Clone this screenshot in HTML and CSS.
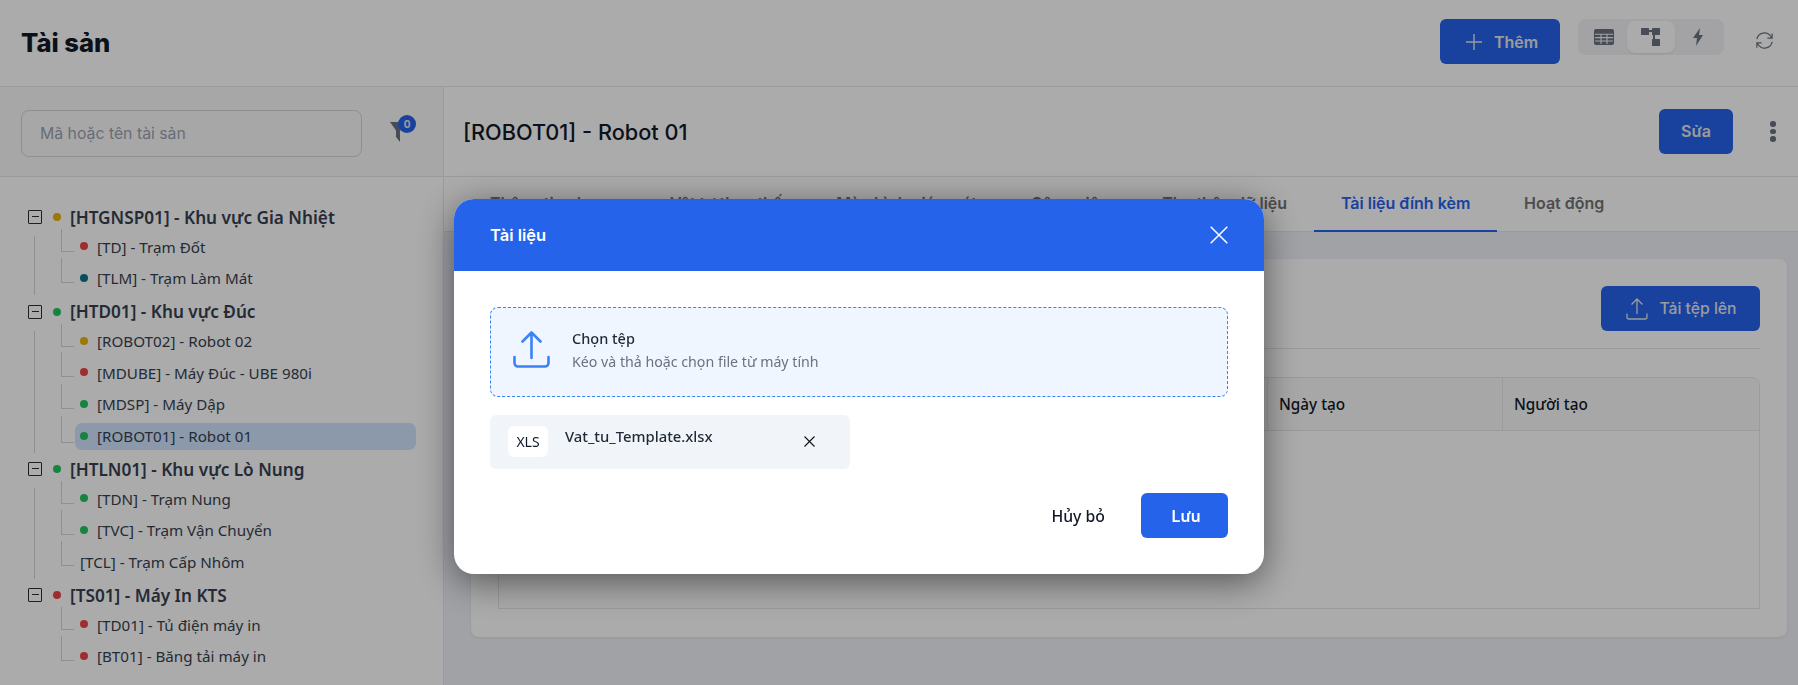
FILE: index.html
```html
<!DOCTYPE html>
<html lang="vi">
<head>
<meta charset="utf-8">
<title>Tài sản</title>
<link rel="stylesheet" href="styles.css">
</head>
<body>
<div class="app">
  <header class="topbar">
    <h1 class="page-title">Tài sản</h1>
    <div class="top-actions">
      <button class="btn btn-add">
        <svg class="ico-plus" viewBox="0 0 16 16"><path d="M8 0v16M0 8h16"/></svg>
        <span>Thêm</span>
      </button>
      <div class="segment">
        <span class="seg-item">
          <svg width="20" height="16" viewBox="0 0 20 16"><rect width="20" height="16" rx="2" fill="#6b7280"/><path d="M1 5.2h18M1 8.6h18M1 12h18M7 5v10M13 5v10" stroke="#f3f4f6" stroke-width="1.1"/></svg>
        </span>
        <span class="seg-item seg-active">
          <svg width="19" height="18" viewBox="0 0 19 18"><g fill="#6b7280"><rect width="8" height="7" y="0" rx=".6"/><rect x="11" width="8" height="7" rx=".6"/><rect x="11" y="11" width="8" height="7" rx=".6"/></g><path d="M7 3h6M13 6v8.5h1" fill="none" stroke="#6b7280" stroke-width="2"/></svg>
        </span>
        <span class="seg-item">
          <svg width="10" height="18" viewBox="0 0 10 18"><path d="M7 0 0 10h4l-1 8 7-11H6z" fill="#6b7280"/></svg>
        </span>
      </div>
      <svg class="ico-refresh" viewBox="0 0 20 20"><path d="M2 8.5A8 8 0 0 1 16.5 5.5L18 7.5M18 2.5v5h-5M18 11.500A8 8 0 0 1 3.500 14.500L2 12.500M2 17.500v-5h5"/></svg>
    </div>
  </header>
  <div class="main">
    <aside class="side">
      <div class="side-search">
        <input class="search" type="text" placeholder="Mã hoặc tên tài sản">
        <span class="filter">
          <svg width="16" height="20" viewBox="0 0 16 20"><path d="M0 0h16L10 8.500V20L6 15V8.500z" fill="#6b7280"/></svg>
          <span class="badge">0</span>
        </span>
      </div>
      <div class="tree">
        <section class="group has-line">
          <div class="root"><i class="toggle"></i><i class="dot yellow"></i>[HTGNSP01] - Khu vực Gia Nhiệt</div>
          <ul class="kids">
            <li class="kid"><i class="dot red"></i>[TD] - Trạm Đốt</li>
            <li class="kid"><i class="dot teal"></i>[TLM] - Trạm Làm Mát</li>
          </ul>
        </section>
        <section class="group has-line">
          <div class="root"><i class="toggle"></i><i class="dot green"></i>[HTD01] - Khu vực Đúc</div>
          <ul class="kids">
            <li class="kid"><i class="dot yellow"></i>[ROBOT02] - Robot 02</li>
            <li class="kid"><i class="dot red"></i>[MDUBE] - Máy Đúc - UBE 980i</li>
            <li class="kid"><i class="dot green"></i>[MDSP] - Máy Dập</li>
            <li class="kid selected"><i class="dot green"></i>[ROBOT01] - Robot 01</li>
          </ul>
        </section>
        <section class="group has-line">
          <div class="root"><i class="toggle"></i><i class="dot green"></i>[HTLN01] - Khu vực Lò Nung</div>
          <ul class="kids">
            <li class="kid"><i class="dot green"></i>[TDN] - Trạm Nung</li>
            <li class="kid"><i class="dot green"></i>[TVC] - Trạm Vận Chuyển</li>
            <li class="kid"><i class="dot none"></i>[TCL] - Trạm Cấp Nhôm</li>
          </ul>
        </section>
        <section class="group">
          <div class="root"><i class="toggle"></i><i class="dot red"></i>[TS01] - Máy In KTS</div>
          <ul class="kids">
            <li class="kid"><i class="dot red"></i>[TD01] - Tủ điện máy in</li>
            <li class="kid"><i class="dot red"></i>[BT01] - Băng tải máy in</li>
          </ul>
        </section>
      </div>
    </aside>
    <main class="detail">
      <div class="detail-head">
        <h2 class="detail-title">[ROBOT01] - Robot 01</h2>
        <button class="btn btn-edit">Sửa</button>
        <span class="kebab"><i></i><i></i><i></i></span>
      </div>
      <nav class="tabs">
        <span class="tab">Thông tin chung</span>
        <span class="tab">Vật tư thay thế</span>
        <span class="tab">Màn hình giám sát</span>
        <span class="tab">Công việc</span>
        <span class="tab">Thu thập dữ liệu</span>
        <span class="tab tab-active">Tài liệu đính kèm</span>
        <span class="tab">Hoạt động</span>
      </nav>
      <div class="content">
        <div class="card">
          <div class="card-bar">
            <button class="btn btn-upload">
              <svg class="ico-up" viewBox="0 0 22 22"><path d="M11 16V1M5.500 6.500 11 1l5.500 5.500M1 15.500V19a2 2 0 0 0 2 2h16a2 2 0 0 0 2-2v-3.500"/></svg>
              <span>Tải tệp lên</span>
            </button>
          </div>
          <div class="table">
            <div class="thead">
              <span class="th th-main"></span>
              <span class="th th-date">Ngày tạo</span>
              <span class="th th-user">Người tạo</span>
            </div>
          </div>
        </div>
      </div>
    </main>
  </div>
</div>

<div class="overlay"></div>
<div class="modal">
  <div class="modal-head">
    <span class="modal-title">Tài liệu</span>
    <svg class="ico-close" viewBox="0 0 18 18"><path d="M.7.7l16.600 16.600M17.300.7.7 17.300"/></svg>
  </div>
  <div class="modal-body">
    <div class="drop">
      <svg class="ico-drop" viewBox="0 0 37 37"><path d="M18.500 27V2M9.500 10.500l9-9 9 9M1.500 26v6a3.500 3.500 0 0 0 3.500 3.500h27a3.500 3.500 0 0 0 3.500-3.500v-6"/></svg>
      <div class="drop-text">
        <div class="drop-title">Chọn tệp</div>
        <div class="drop-sub">Kéo và thả hoặc chọn file từ máy tính</div>
      </div>
    </div>
    <div class="file">
      <span class="file-type">XLS</span>
      <span class="file-name">Vat_tu_Template.xlsx</span>
      <svg class="ico-x" viewBox="0 0 11 11"><path d="M.5.5l10 10M10.500.5l-10 10"/></svg>
    </div>
    <div class="modal-foot">
      <button class="btn-cancel">Hủy bỏ</button>
      <button class="btn btn-save">Lưu</button>
    </div>
  </div>
</div>
</body>
</html>
```

FILE: styles.css
```css
* { box-sizing: border-box; }
html, body { margin: 0; height: 100%; overflow: hidden; background: #fff; }
body { font-family: Inter, "Noto Sans", sans-serif; color: #111827; }
h1, h2, ul { margin: 0; padding: 0; }
li { list-style: none; }
i { display: block; font-style: normal; }
button { font-family: inherit; border: 0; cursor: pointer; }

.app { height: 685px; display: flex; flex-direction: column; }

.topbar { height: 87px; flex: none; display: flex; align-items: center; justify-content: space-between; padding: 0 24px 0 21px; border-bottom: 1px solid #e5e7eb; }
.page-title { font-size: 25.600px; font-weight: 800; line-height: 30px; color: #111827; }
.top-actions { display: flex; align-items: flex-start; margin-top: -3px; }

.btn { background: #2563eb; color: #e5e7eb; border-radius: 6px; height: 45px; font-size: 16px; font-weight: 600; display: flex; align-items: center; justify-content: center; }
.btn-add { width: 120px; gap: 12px; padding-left: 10px; margin-right: 18px; }
.ico-plus { width: 16px; height: 16px; fill: none; stroke: #e5e7eb; stroke-width: 1.400; }

.segment { width: 146px; height: 36px; background: #f3f4f6; border-radius: 8px; display: flex; align-items: center; padding: 0 2px; gap: 0; margin-right: 31px; }
.seg-item { flex: 1; height: 32px; display: flex; align-items: center; justify-content: center; border-radius: 8px; }
.seg-active { background: #fff; box-shadow: 0 1px 2px rgba(0,0,0,.08); }
.ico-refresh { width: 19px; height: 19px; margin-top: 12px; fill: none; stroke: #6b7280; stroke-width: 1.300; }

.main { flex: 1; min-height: 0; display: flex; }

.side { width: 444px; flex: none; border-right: 1px solid #e5e7eb; display: flex; flex-direction: column; }
.side-search { height: 90px; flex: none; background: #f9fafb; border-bottom: 1px solid #e5e7eb; display: flex; align-items: center; padding: 4px 0 0 21px; }
.search { width: 341px; height: 47px; border: 1px solid #d1d5db; border-radius: 8px; background: #f9fafb; padding: 0 18px; font-family: inherit; font-size: 15.800px; outline: 0; }
.search::placeholder { color: #9ca3af; opacity: 1; }
.filter { position: relative; width: 16px; height: 20px; margin-left: 28px; margin-top: -4px; }
.filter svg { display: block; }
.badge { position: absolute; left: 8px; top: -7px; width: 18px; height: 18px; border-radius: 50%; background: #2563eb; color: #e5e7eb; font-size: 10px; font-weight: 700; display: flex; align-items: center; justify-content: center; }

.tree { padding: 26px 0 0 28px; font-family: "Noto Sans", sans-serif; color: #374151; }
.group { position: relative; margin-bottom: 3.500px; }
.has-line::before { content: ""; position: absolute; left: 6px; top: 33px; bottom: -1px; width: 1px; background: #d1d5db; }
.root { height: 28px; display: flex; align-items: center; font-size: 17.200px; font-weight: 600; white-space: nowrap; }
.toggle { position: relative; width: 14px; height: 14px; border: 1.300px solid #2f2f2f; border-radius: 1px; margin-right: 11px; }
.toggle::after { content: ""; position: absolute; left: 2.500px; right: 2.500px; top: 5px; height: 1.300px; background: #2f2f2f; }
.dot { width: 8px; height: 8px; border-radius: 50%; margin-right: 9px; flex: none; }
.yellow { background: #eab308; }
.red { background: #ef4444; }
.green { background: #22c55e; }
.teal { background: #0e7490; }
.none { display: none; }

.kids { position: relative; margin-left: 33px; display: flex; flex-direction: column; }
.kid { position: relative; height: 31.500px; flex: none; display: flex; align-items: center; padding-left: 19px; font-size: 15.200px; white-space: nowrap; }
.kid .dot { margin-top: -1px; }
.kid::before { content: ""; position: absolute; left: 0; top: -5px; height: 24px; width: 12px; border-left: 1px solid #d1d5db; border-bottom: 1px solid #d1d5db; }
.kid:first-child::before { top: -2px; height: 22px; }
.selected { width: 341px; margin-left: 14px; height: 27px; margin-top: 2.500px; margin-bottom: 2px; border-radius: 7px; background: #cfe5ff; padding-left: 5px; }
.selected::before { left: -14px; top: -7px; height: 26px; }

.detail { flex: 1; min-width: 0; display: flex; flex-direction: column; }
.detail-head { height: 90px; flex: none; border-bottom: 1px solid #e5e7eb; display: flex; align-items: center; padding: 0 0 0 19px; }
.detail-title { flex: 1; font-size: 21.700px; font-weight: 500; color: #111827; }
.btn-edit { width: 74px; margin-right: 37px; margin-top: -1px; }
.kebab { width: 6px; margin-right: 22px; display: flex; flex-direction: column; gap: 2px; margin-top: 0; }
.kebab i { width: 5.500px; height: 5.500px; background: #6b7280; border-radius: 50%; }

.tabs { height: 55px; flex: none; border-bottom: 1px solid #e5e7eb; display: flex; padding-left: 19px; }
.tab { padding: 0 26.900px 2px; display: flex; align-items: center; font-size: 16px; font-weight: 600; color: #737373; white-space: nowrap; margin-bottom: -1px; border-bottom: 2px solid transparent; }
.tab-active { color: #2563eb; border-bottom-color: #2563eb; }

.content { flex: 1; background: #eff2f8; padding: 27px 11px 48px 27px; }
.card { height: 378px; background: #fff; border-radius: 8px; padding: 27px 27px 28px; box-shadow: 0 1px 3px rgba(0,0,0,.08); display: flex; flex-direction: column; }
.card-bar { height: 63px; flex: none; display: flex; justify-content: flex-end; align-items: flex-start; border-bottom: 1px solid #e5e7eb; margin-bottom: 28px; }
.btn-upload { width: 159px; padding-left: 8px; font-weight: 500; font-size: 15.700px; gap: 11px; }
.ico-up { width: 22px; height: 22px; fill: none; stroke: #e5e7eb; stroke-width: 1.300; }
.table { flex: 1; border: 1px solid #e5e7eb; border-radius: 8px 8px 0 0; }
.thead { height: 53px; display: grid; grid-template-columns: 769px 235px 1fr; background: #fafafa; border-bottom: 1px solid #e5e7eb; border-radius: 8px 8px 0 0; }
.th { display: flex; align-items: center; padding-left: 11px; font-family: "Noto Sans", sans-serif; font-size: 15.300px; font-weight: 500; color: #111827; border-right: 1px solid #e5e7eb; }
.th-user { border-right: 0; }

.overlay { position: fixed; inset: 0; background: rgba(0,0,0,.33); }

.modal { position: fixed; left: 454px; top: 199px; width: 810px; height: 375px; background: #fff; border-radius: 20px; box-shadow: 0 8px 36px rgba(0,0,0,.5); }
.modal-head { height: 72px; background: #2563eb; border-radius: 20px 20px 0 0; display: flex; align-items: center; justify-content: space-between; padding: 0 36px; }
.modal-title { color: #fff; font-size: 16.500px; font-weight: 600; }
.ico-close { width: 18px; height: 18px; fill: none; stroke: #fff; stroke-width: 1.500; }
.modal-body { padding: 36px; }

.drop { height: 90px; border: 1px dashed #3b82f6; border-radius: 8px; background: #eff6ff; display: flex; align-items: center; padding-left: 22px; gap: 22px; }
.ico-drop { width: 37px; height: 37px; fill: none; stroke: #3b82f6; stroke-width: 2.600; stroke-linecap: round; stroke-linejoin: round; margin-top: -6px; }
.drop-text { display: flex; flex-direction: column; gap: 6px; margin-top: -4px; }
.drop-title { font-family: "Noto Sans", sans-serif; font-size: 14.500px; font-weight: 500; line-height: 18px; color: #1f2937; }
.drop-sub { font-size: 14.200px; line-height: 18px; color: #6b7280; font-family: "Noto Sans", sans-serif; }

.file { width: 360px; height: 54px; margin-top: 18px; background: #f1f5f9; border-radius: 6px; display: flex; align-items: flex-start; padding: 11px 0 0 18px; position: relative; }
.file-type { width: 40px; height: 31px; background: #fff; border-radius: 6px; display: flex; align-items: center; justify-content: center; font-family: "Noto Sans", sans-serif; font-size: 14px; color: #111827; }
.file-name { margin-left: 17px; margin-top: -2px; font-family: "Noto Sans", sans-serif; font-size: 14.800px; font-weight: 500; line-height: 24px; color: #1f2937; flex: 1; }
.ico-x { width: 11px; height: 11px; margin: 10px 35px 0 0; fill: none; stroke: #111; stroke-width: 1.100; }

.modal-foot { display: flex; justify-content: flex-end; align-items: center; margin-top: 24px; }
.btn-cancel { background: none; padding: 0; font-family: "Noto Sans", sans-serif; font-size: 15.800px; font-weight: 500; color: #111827; margin-right: 36px; }
.btn-save { width: 87px; padding-left: 9px; background: #2563eb; color: #fff; font-weight: 600; }
```
